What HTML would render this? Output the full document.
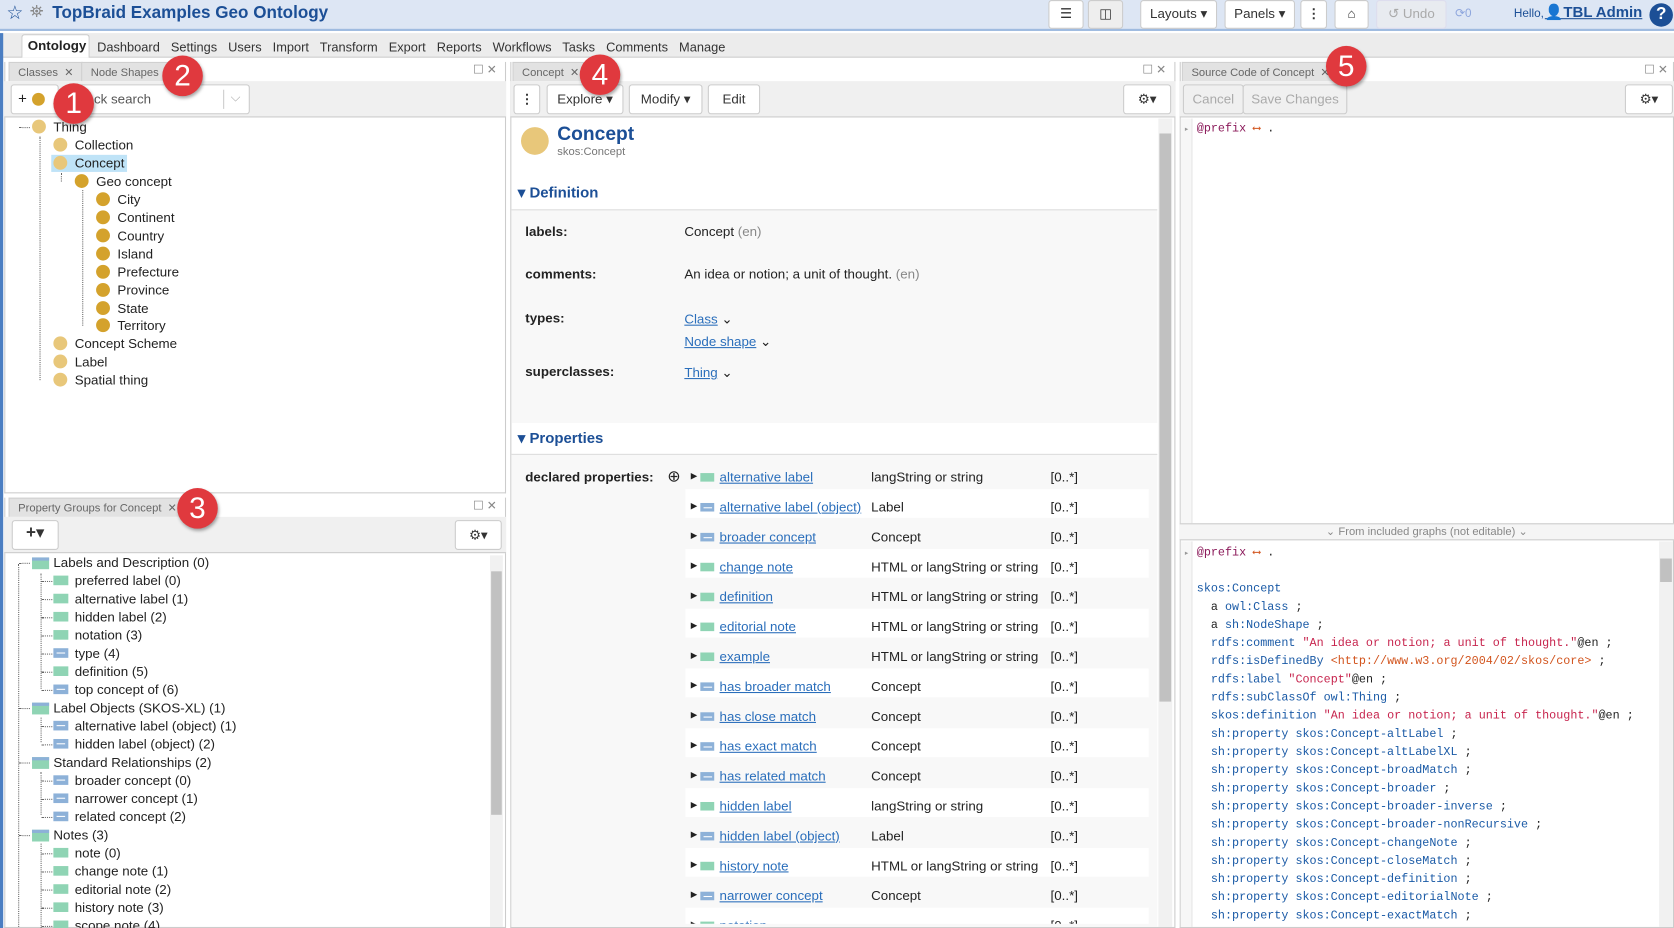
<!DOCTYPE html>
<html><head><meta charset="utf-8">
<style>
*{box-sizing:border-box;margin:0;padding:0}
html,body{width:1674px;height:928px;overflow:hidden;background:#fff}
#w{position:absolute;left:0;top:0;width:1568px;height:869px;overflow:hidden;transform:scale(1.0676,1.0679);transform-origin:0 0;font-family:"Liberation Sans",sans-serif;font-size:12px;color:#222}
.a{position:absolute}
.btn{position:absolute;background:#fff;border:1px solid #ccc;border-radius:3px;text-align:center;font-size:12.5px;color:#333}
.tab{position:absolute;background:#e2e2e2;border:1px solid #d0d0d0;border-bottom:none;color:#666;font-size:10.5px;padding:3px 8px 0}
.badge{position:absolute;width:38px;height:38px;border-radius:50%;background:#e0393e;color:#fff;font-size:28px;text-align:center;line-height:38px;box-shadow:1px 2px 3px rgba(0,0,0,.35)}
.dot{position:absolute;width:13px;height:13px;border-radius:50%}
.l{background:#e8c77a}.d{background:#d4a22c}
.tr{position:absolute;font-size:12.5px;color:#222}
.g{position:absolute;width:14px;height:9px;background:#8fd4b4}
.o{position:absolute;width:14px;height:9px;background:#8db1d8}
.o:after{content:"";position:absolute;left:3px;top:4px;width:8px;height:1px;background:#fff}
.fo{position:absolute;width:16px;height:11px;background:#8fd4b4;border-top:3px solid #8db1d8}
.lnk{color:#2a6ebb;text-decoration:underline}
.code{position:absolute;font-family:"Liberation Mono",monospace;font-size:11px;white-space:pre;line-height:17px;color:#222}
.b{color:#1a5aa6}.r{color:#c7254e}.p{color:#8b1a5a}.or{color:#d2541d}
.vd{position:absolute;border-left:1px dotted #666}
.hd{position:absolute;border-top:1px dotted #666;width:10px}
.sb{position:absolute;background:#f1f1f1}
.th{position:absolute;background:#c1c1c1}
</style></head><body><div id="w">

<div class="a" style="left:0;top:0;width:1568px;height:29px;background:#dde6f4;border-bottom:2px solid #9fbbe0"></div>
<div class="a" style="left:6px;top:2px;font-size:18px;color:#1c4f96">☆</div>
<div class="a" style="left:28px;top:3px;font-size:16px;color:#888">⛯</div>
<div class="a" style="left:49px;top:4px;font-size:16px;font-weight:bold;color:#1c4f96">TopBraid Examples Geo Ontology</div>
<div class="btn" style="left:982px;top:0;width:33px;height:27px;line-height:25px">☰</div>
<div class="btn" style="left:1019px;top:0;width:33px;height:27px;line-height:25px;background:#eee">◫</div>
<div class="btn" style="left:1068px;top:0;width:72px;height:27px;line-height:25px">Layouts ▾</div>
<div class="btn" style="left:1147px;top:0;width:66px;height:27px;line-height:25px">Panels ▾</div>
<div class="btn" style="left:1218px;top:0;width:25px;height:27px;line-height:25px;font-weight:bold">⋮</div>
<div class="btn" style="left:1250px;top:0;width:32px;height:27px;line-height:25px">⌂</div>
<div class="btn" style="left:1289px;top:0;width:66px;height:27px;line-height:25px;background:#e8ebf0;color:#aaa;border-color:#dde">↺ Undo</div>
<div class="a" style="left:1363px;top:6px;color:#8ea6dd;font-size:11px">⟳0</div>
<div class="a" style="left:1418px;top:7px;font-size:11px;color:#1c4f96">Hello,</div>
<div class="a" style="left:1447px;top:3px;font-size:14px;font-weight:bold;color:#1c4f96;text-decoration:underline">👤TBL Admin</div>
<div class="a" style="left:1545px;top:3px;width:22px;height:22px;border-radius:50%;background:#1c4f96;color:#fff;text-align:center;font-weight:bold;font-size:16px;line-height:22px">?</div>

<div class="a" style="left:0;top:31px;width:1568px;height:23px;background:#ececec;border-bottom:1px solid #ccc"></div>
<div class="a" style="left:0;top:31px;width:3px;height:838px;background:#4b7ec2"></div>
<div class="a" style="left:20px;top:32px;width:64px;height:22px;background:#fff;border:1px solid #ccc;border-bottom:none;border-radius:3px 3px 0 0"></div>
<div class="a" style="left:26px;top:36px;font-size:12.5px;font-weight:bold">Ontology</div>
<div class="a" style="left:91px;top:37px;font-size:12px;color:#333;word-spacing:7px">Dashboard Settings Users Import Transform Export Reports Workflows Tasks Comments Manage</div>

<div class="a" style="left:4px;top:58px;width:470px;height:404px;border:1px solid #ccc;border-top:none"></div>
<div class="tab" style="left:8px;top:58px;height:18px">Classes &nbsp;✕</div>
<div class="tab" style="left:76px;top:58px;height:18px;width:90px">Node Shapes</div>
<div class="a" style="left:443px;top:59px;color:#888;font-size:11px">☐ ✕</div>
<div class="a" style="left:4px;top:76px;width:470px;height:34px;background:#f0f0f0;border-bottom:1px solid #ccc"></div>
<div class="btn" style="left:10px;top:79px;width:45px;height:28px"></div>
<div class="a" style="left:17px;top:84px;font-size:14px">+</div>
<div class="dot d" style="left:30px;top:87px;width:12px;height:12px"></div>
<div class="btn" style="left:62px;top:79px;width:172px;height:28px"></div>
<div class="a" style="left:88px;top:86px;color:#555;font-size:12.5px">ck search</div>
<div class="a" style="left:209px;top:84px;height:18px;border-left:1px solid #ccc"></div>
<div class="a" style="left:216px;top:84px;color:#aaa">⌵</div>

<div class="vd" style="left:37px;top:128px;height:228px"></div>
<div class="vd" style="left:57px;top:162px;height:8px"></div>
<div class="vd" style="left:77px;top:178px;height:127px"></div>
<div class="hd" style="left:18px;top:119px"></div>
<div class="dot l" style="left:30px;top:112px"></div><div class="tr" style="left:50px;top:112px">Thing</div>
<div class="dot l" style="left:50px;top:129px"></div><div class="tr" style="left:70px;top:129px">Collection</div>
<div class="a" style="left:48px;top:145px;width:71px;height:16px;background:#bfe3f7"></div>
<div class="dot l" style="left:50px;top:146px"></div><div class="tr" style="left:70px;top:146px">Concept</div>
<div class="dot d" style="left:70px;top:163px"></div><div class="tr" style="left:90px;top:163px">Geo concept</div>
<div class="dot d" style="left:90px;top:180px"></div><div class="tr" style="left:110px;top:180px">City</div>
<div class="dot d" style="left:90px;top:197px"></div><div class="tr" style="left:110px;top:197px">Continent</div>
<div class="dot d" style="left:90px;top:214px"></div><div class="tr" style="left:110px;top:214px">Country</div>
<div class="dot d" style="left:90px;top:231px"></div><div class="tr" style="left:110px;top:231px">Island</div>
<div class="dot d" style="left:90px;top:248px"></div><div class="tr" style="left:110px;top:248px">Prefecture</div>
<div class="dot d" style="left:90px;top:265px"></div><div class="tr" style="left:110px;top:265px">Province</div>
<div class="dot d" style="left:90px;top:282px"></div><div class="tr" style="left:110px;top:282px">State</div>
<div class="dot d" style="left:90px;top:298px"></div><div class="tr" style="left:110px;top:298px">Territory</div>
<div class="dot l" style="left:50px;top:315px"></div><div class="tr" style="left:70px;top:315px">Concept Scheme</div>
<div class="dot l" style="left:50px;top:332px"></div><div class="tr" style="left:70px;top:332px">Label</div>
<div class="dot l" style="left:50px;top:349px"></div><div class="tr" style="left:70px;top:349px">Spatial thing</div>

<div class="a" style="left:4px;top:466px;width:470px;height:403px;border:1px solid #ccc;border-top:none"></div>
<div class="tab" style="left:8px;top:466px;height:18px">Property Groups for Concept &nbsp;✕</div>
<div class="a" style="left:443px;top:467px;color:#888;font-size:11px">☐ ✕</div>
<div class="a" style="left:4px;top:484px;width:470px;height:34px;background:#f0f0f0;border-bottom:1px solid #ccc"></div>
<div class="btn" style="left:11px;top:487px;width:44px;height:28px;font-size:16px;line-height:24px"><b>+</b>▾</div>
<div class="btn" style="left:426px;top:487px;width:44px;height:28px;line-height:26px">⚙▾</div>
<div class="sb" style="left:459px;top:520px;width:12px;height:348px"></div>
<div class="th" style="left:460px;top:535px;width:10px;height:228px"></div>
<div class="vd" style="left:17px;top:528px;height:340px"></div>
<div class="vd" style="left:38px;top:537px;height:108px"></div>
<div class="vd" style="left:38px;top:672px;height:23px"></div>
<div class="vd" style="left:38px;top:723px;height:40px"></div>
<div class="vd" style="left:38px;top:790px;height:79px"></div>
<div id="pg"></div>

<div class="a" style="left:478px;top:58px;width:623px;height:811px;border:1px solid #ccc;border-top:none"></div>
<div class="tab" style="left:480px;top:58px;height:18px">Concept &nbsp;✕</div>
<div class="a" style="left:1070px;top:59px;color:#888;font-size:11px">☐ ✕</div>
<div class="a" style="left:478px;top:76px;width:623px;height:34px;background:#f0f0f0;border-bottom:1px solid #ccc"></div>
<div class="btn" style="left:481px;top:79px;width:25px;height:28px;line-height:26px;font-weight:bold">⋮</div>
<div class="btn" style="left:512px;top:79px;width:72px;height:28px;line-height:26px">Explore ▾</div>
<div class="btn" style="left:589px;top:79px;width:69px;height:28px;line-height:26px">Modify ▾</div>
<div class="btn" style="left:663px;top:79px;width:49px;height:28px;line-height:26px">Edit</div>
<div class="btn" style="left:1052px;top:79px;width:45px;height:28px;line-height:26px">⚙▾</div>
<div class="sb" style="left:1085px;top:111px;width:13px;height:757px"></div>
<div class="th" style="left:1086px;top:125px;width:11px;height:532px"></div>
<div class="dot l" style="left:488px;top:119px;width:26px;height:26px"></div>
<div class="a" style="left:522px;top:115px;font-size:18px;font-weight:bold;color:#1c4f96">Concept</div>
<div class="a" style="left:522px;top:136px;font-size:10.5px;color:#777">skos:Concept</div>
<div class="a" style="left:485px;top:172px;font-size:14px;font-weight:bold;color:#1c4f96">▾ Definition</div>
<div class="a" style="left:479px;top:196px;width:605px;height:200px;background:#f8f8f8;border-top:1px solid #ddd"></div>
<div class="a" style="left:492px;top:210px;font-size:12.5px;font-weight:bold">labels:</div>
<div class="a" style="left:641px;top:210px;font-size:12.5px">Concept <span style="color:#888">(en)</span></div>
<div class="a" style="left:492px;top:250px;font-size:12.5px;font-weight:bold">comments:</div>
<div class="a" style="left:641px;top:250px;font-size:12.5px">An idea or notion; a unit of thought. <span style="color:#888">(en)</span></div>
<div class="a" style="left:492px;top:291px;font-size:12.5px;font-weight:bold">types:</div>
<div class="a" style="left:641px;top:291px;font-size:12.5px"><span class="lnk">Class</span> ⌄</div>
<div class="a" style="left:641px;top:312px;font-size:12.5px"><span class="lnk">Node shape</span> ⌄</div>
<div class="a" style="left:492px;top:341px;font-size:12.5px;font-weight:bold">superclasses:</div>
<div class="a" style="left:641px;top:341px;font-size:12.5px"><span class="lnk">Thing</span> ⌄</div>
<div class="a" style="left:485px;top:402px;font-size:14px;font-weight:bold;color:#1c4f96">▾ Properties</div>
<div class="a" style="left:479px;top:425px;width:605px;height:443px;background:#f8f8f8;border-top:1px solid #ddd"></div>
<div class="a" style="left:492px;top:440px;font-size:12.5px;font-weight:bold">declared properties:</div>
<div class="a" style="left:625px;top:437px;font-size:15px">⊕</div>
<div class="a" style="left:479px;top:425px;width:605px;height:440px;overflow:hidden"><div id="props"></div></div>

<div class="a" style="left:1105px;top:58px;width:463px;height:811px;border:1px solid #ccc;border-top:none"></div>
<div class="tab" style="left:1107px;top:58px;height:18px">Source Code of Concept &nbsp;✕</div>
<div class="a" style="left:1540px;top:59px;color:#888;font-size:11px">☐ ✕</div>
<div class="a" style="left:1105px;top:76px;width:463px;height:34px;background:#f0f0f0;border-bottom:1px solid #ccc"></div>
<div class="btn" style="left:1108px;top:79px;width:57px;height:28px;line-height:26px;color:#aaa;background:#f0f0f0">Cancel</div>
<div class="btn" style="left:1164px;top:79px;width:98px;height:28px;line-height:26px;color:#aaa;background:#f0f0f0">Save Changes</div>
<div class="btn" style="left:1522px;top:79px;width:45px;height:28px;line-height:26px">⚙▾</div>
<div class="a" style="left:1106px;top:111px;width:11px;height:379px;background:#f7f7f7;border-right:1px solid #e5e5e5"></div>
<div class="code" style="left:1109px;top:113px;font-size:8px;color:#999">▸</div>
<div class="code" style="left:1121px;top:113px"><span class="p">@prefix</span> <span class="or">⟷</span> .</div>
<div class="a" style="left:1105px;top:490px;width:463px;height:16px;background:#f5f5f5;border-top:1px solid #ccc;border-bottom:1px solid #ccc;text-align:center;font-size:10.5px;color:#888;line-height:14px">⌄ From included graphs (not editable) ⌄</div>
<div class="a" style="left:1106px;top:507px;width:11px;height:361px;background:#f7f7f7;border-right:1px solid #e5e5e5"></div>
<div class="sb" style="left:1554px;top:507px;width:13px;height:361px"></div>
<div class="th" style="left:1555px;top:523px;width:11px;height:22px"></div>
<div class="code" style="left:1109px;top:510px;font-size:8px;color:#999">▸</div>
<div class="code" style="left:1121px;top:510px"><span class="p">@prefix</span> <span class="or">⟷</span> .

<span class="b">skos:Concept</span>
  a <span class="b">owl:Class</span> ;
  a <span class="b">sh:NodeShape</span> ;
  <span class="b">rdfs:comment</span> <span class="r">"An idea or notion; a unit of thought."</span>@en ;
  <span class="b">rdfs:isDefinedBy</span> <span class="or">&lt;http://www.w3.org/2004/02/skos/core&gt;</span> ;
  <span class="b">rdfs:label</span> <span class="r">"Concept"</span>@en ;
  <span class="b">rdfs:subClassOf owl:Thing</span> ;
  <span class="b">skos:definition</span> <span class="r">"An idea or notion; a unit of thought."</span>@en ;
  <span class="b">sh:property skos:Concept-altLabel</span> ;
  <span class="b">sh:property skos:Concept-altLabelXL</span> ;
  <span class="b">sh:property skos:Concept-broadMatch</span> ;
  <span class="b">sh:property skos:Concept-broader</span> ;
  <span class="b">sh:property skos:Concept-broader-inverse</span> ;
  <span class="b">sh:property skos:Concept-broader-nonRecursive</span> ;
  <span class="b">sh:property skos:Concept-changeNote</span> ;
  <span class="b">sh:property skos:Concept-closeMatch</span> ;
  <span class="b">sh:property skos:Concept-definition</span> ;
  <span class="b">sh:property skos:Concept-editorialNote</span> ;
  <span class="b">sh:property skos:Concept-exactMatch</span> ;</div>

<div class="badge" style="left:50px;top:78px">1</div>
<div class="badge" style="left:152px;top:52px">2</div>
<div class="badge" style="left:166px;top:457px">3</div>
<div class="badge" style="left:543px;top:51px">4</div>
<div class="badge" style="left:1242px;top:43px">5</div>

<script>
var pg=[[0,'f','Labels and Description (0)'],[1,'g','preferred label (0)'],[1,'g','alternative label (1)'],[1,'g','hidden label (2)'],[1,'g','notation (3)'],[1,'o','type (4)'],[1,'g','definition (5)'],[1,'o','top concept of (6)'],[0,'f','Label Objects (SKOS-XL) (1)'],[1,'o','alternative label (object) (1)'],[1,'o','hidden label (object) (2)'],[0,'f','Standard Relationships (2)'],[1,'o','broader concept (0)'],[1,'o','narrower concept (1)'],[1,'o','related concept (2)'],[0,'f','Notes (3)'],[1,'g','note (0)'],[1,'g','change note (1)'],[1,'g','editorial note (2)'],[1,'g','history note (3)'],[1,'g','scope note (4)']];
var h='';pg.forEach(function(r,i){var y=520+i*17;var x=r[0]?50:30;
h+='<div class="hd" style="left:'+(r[0]?39:18)+'px;top:'+(y+7)+'px"></div>';
h+='<div class="'+(r[1]=='f'?'fo':r[1])+'" style="left:'+x+'px;top:'+(y+2)+'px"></div><div class="tr" style="left:'+(x+20)+'px;top:'+y+'px">'+r[2]+'</div>';});
document.getElementById('pg').outerHTML=h;
var pr=[['g','alternative label','langString or string'],['o','alternative label (object)','Label'],['o','broader concept','Concept'],['g','change note','HTML or langString or string'],['g','definition','HTML or langString or string'],['g','editorial note','HTML or langString or string'],['g','example','HTML or langString or string'],['o','has broader match','Concept'],['o','has close match','Concept'],['o','has exact match','Concept'],['o','has related match','Concept'],['g','hidden label','langString or string'],['o','hidden label (object)','Label'],['g','history note','HTML or langString or string'],['o','narrower concept','Concept'],['g','notation','']];
h='';pr.forEach(function(r,i){var y=440+i*28-425;var X=-479;
if(i%2)h+='<div class="a" style="left:'+(642+X)+'px;top:'+(y-10)+'px;width:434px;height:27px;background:#fff"></div>';
h+='<div class="a" style="left:'+(647+X)+'px;top:'+(y+1)+'px;font-size:8px">▶</div><div class="'+r[0]+'" style="left:'+(656+X)+'px;top:'+(y+3)+'px;width:13px;height:8px"></div><div class="tr lnk" style="left:'+(674+X)+'px;top:'+y+'px">'+r[1]+'</div><div class="tr" style="left:'+(816+X)+'px;top:'+y+'px">'+r[2]+'</div><div class="tr" style="left:'+(984+X)+'px;top:'+y+'px">[0..*]</div>';});
document.getElementById('props').outerHTML=h;
</script>
</div></body></html>
